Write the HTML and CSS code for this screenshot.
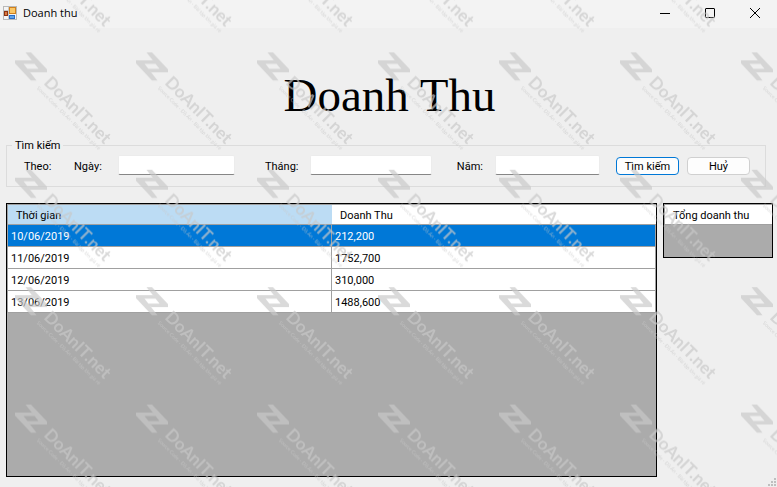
FILE: index.html
```html
<!DOCTYPE html>
<html lang="vi">
<head>
  <meta charset="UTF-8" />
  <meta name="viewport" content="width=device-width, initial-scale=1.0"/>
  <title>Doanh thu</title>
  <link rel="stylesheet" href="styles.css">
</head>
<body>

  <header class="title-bar">
    <svg class="app-icon" width="14" height="14" viewBox="0 0 14 14" aria-hidden="true">
      <rect x="0.5" y="0.5" width="13" height="13" fill="#f4f4f4" stroke="#b9b9b9"/>
      <path d="M1 4.5h5M5.5 1v12" stroke="#c8c8c8"/>
      <rect x="6.5" y="1.5" width="6" height="6" fill="#fbc765" stroke="#d0801c"/>
      <rect x="1.5" y="5.5" width="3" height="4" fill="#d9773f" stroke="#8c3210"/>
      <rect x="6.5" y="9.5" width="5" height="3" fill="#5fa4ea" stroke="#2b6cc4"/>
    </svg>
    <span class="title-text">Doanh thu</span>
    <div class="window-buttons">
      <button type="button" aria-label="Minimize">
        <svg width="12" height="12" viewBox="0 0 12 12"><path d="M1 6.5h10"/></svg>
      </button>
      <button type="button" aria-label="Maximize">
        <svg width="12" height="12" viewBox="0 0 12 12"><rect x="1.5" y="1.5" width="9" height="9" rx="0.5"/></svg>
      </button>
      <button type="button" aria-label="Close">
        <svg width="12" height="12" viewBox="0 0 12 12"><path d="M1 1l10 10M11 1L1 11"/></svg>
      </button>
    </div>
  </header>

  <main class="window-body">
    <h1>Doanh Thu</h1>

    <form>
      <fieldset class="search-box">
        <legend>Tìm kiếm</legend>
        <span class="search-by">Theo:</span>
        <label class="day-label" for="day">Ngày:</label>
        <input class="day" type="text" id="day" />
        <label class="month-label" for="month">Tháng:</label>
        <input class="month" type="text" id="month" />
        <label class="year-label" for="year">Năm:</label>
        <input class="year" type="text" id="year" />
        <div class="buttons">
          <button type="button" class="default">Tìm kiếm</button>
          <button type="button">Huỷ</button>
        </div>
      </fieldset>
    </form>

    <div class="grids">
      <div class="grid revenue">
        <table>
          <thead>
            <tr>
              <th class="current">Thời gian</th>
              <th>Doanh Thu</th>
            </tr>
          </thead>
          <tbody>
            <tr class="selected"><td>10/06/2019</td><td>212,200</td></tr>
            <tr><td>11/06/2019</td><td>1752,700</td></tr>
            <tr><td>12/06/2019</td><td>310,000</td></tr>
            <tr><td>13/06/2019</td><td>1488,600</td></tr>
          </tbody>
        </table>
      </div>
      <div class="grid total">
        <table>
          <thead>
            <tr><th>Tổng doanh thu</th></tr>
          </thead>
        </table>
      </div>
    </div>
  </main>

  <svg class="size-grip" width="9" height="9" viewBox="0 0 9 9" aria-hidden="true">
    <path d="M6 0h2v2h-2zM3 3h2v2h-2zM6 3h2v2h-2zM0 6h2v2h-2zM3 6h2v2h-2zM6 6h2v2h-2z"/>
  </svg>

  <svg class="watermark" aria-hidden="true">
    <defs>
      <pattern id="mark" x="14" y="-65" width="121" height="117.4" patternUnits="userSpaceOnUse">
        <path d="M1 8h16.500l3.500 3.500h-11.500l13 16.500h-5.500l-16-17zM33 20h-16.500l-3.500-3.500h11.500l-13-16.500h5.500l16 17z"/>
        <g transform="translate(31 29) rotate(45)">
          <text class="mark-name" x="0" y="3">DoAnIT.net</text>
          <text class="mark-note" x="-1" y="11">Source Code - Đồ Án - Bài tập lớn giá rẻ</text>
        </g>
      </pattern>
    </defs>
    <rect width="100%" height="100%" fill="url(#mark)"/>
  </svg>

</body>
</html>
```
FILE: styles.css
```css
* {
  box-sizing: border-box;
}

body {
  margin: 0;
  min-height: 100vh;
  display: flex;
  flex-direction: column;
  position: relative;
  background: #efefef;
  color: #000;
  font-family: Roboto, "Liberation Sans", sans-serif;
  font-size: 11px;
  line-height: 16px;
}

button,
input {
  font: inherit;
  color: inherit;
}

.title-bar {
  display: flex;
  align-items: center;
  height: 28px;
  padding-left: 3px;
  padding-bottom: 3px;
  background: #f3f3f3;
}

.title-text {
  flex: 1;
  margin-left: 6px;
  font-family: "Open Sans", sans-serif;
}

.window-buttons {
  display: flex;
}

.window-buttons button {
  display: flex;
  align-items: center;
  justify-content: center;
  width: 45px;
  height: 25px;
  padding: 0;
  border: none;
  background: none;
}

.window-buttons svg {
  fill: none;
  stroke: #000;
}

.window-body {
  flex: 1;
  display: flex;
  flex-direction: column;
  padding: 39px 4px 10px 6px;
}

h1 {
  margin: 0 0 14px;
  font-family: "Liberation Serif", serif;
  font-size: 47px;
  font-weight: normal;
  line-height: 56px;
  text-align: center;
}

.search-box {
  display: flex;
  align-items: center;
  margin: 0 7px 16px 0;
  padding: 1px 15px 11px 17px;
  border: 1px solid #dcdcdc;
}

.search-box legend {
  margin-left: -12px;
  padding: 1px 3px 0;
}

.search-box span,
.search-box label {
  padding-top: 3px;
}

.search-by {
  width: 50px;
}

.day-label {
  width: 44px;
}

.month-label {
  width: 45px;
  margin-left: 30px;
}

.year-label {
  width: 38px;
  margin-left: 25px;
}

.search-box input {
  width: 0;
  height: 20px;
  padding: 0;
  border: 1px solid #ececec;
  border-bottom-color: #868686;
  border-radius: 2px;
  background: #fff;
}

.search-box .day {
  flex: 117;
}

.search-box .month {
  flex: 122;
}

.search-box .year {
  flex: 105;
}

.buttons {
  display: flex;
  gap: 8px;
  margin-top: 2px;
  margin-left: 16px;
}

.buttons button {
  width: 63px;
  height: 18px;
  padding: 2px 0 0;
  border: 1px solid #d0d0d0;
  border-radius: 4px;
  background: #fdfdfd;
  line-height: 14px;
}

.buttons .default {
  border-color: #0078d7;
}

.grids {
  flex: 1;
  display: flex;
  align-items: flex-start;
  gap: 6px;
}

.grid {
  border: 1px solid #000;
  background: #ababab;
}

.revenue {
  flex: 1;
  align-self: stretch;
}

.total {
  width: 110px;
  height: 55px;
}

.grid table {
  width: 100%;
  table-layout: fixed;
  border-collapse: separate;
  border-spacing: 0;
  border-left: 1px solid #a0a0a0;
}

.grid th {
  height: 21px;
  padding: 2px 8px 0;
  border-top: 1px solid #a0a0a0;
  border-bottom: 1px solid #a0a0a0;
  background: #fff;
  font-weight: normal;
  text-align: left;
}

.grid th.current {
  background: #bcdcf4;
}

.grid td {
  height: 22px;
  padding: 2px 3px 0;
  border-right: 1px solid #a0a0a0;
  border-bottom: 1px solid #a0a0a0;
  background: #fff;
}

.grid .selected td {
  background: #0078d7;
  color: #fff;
}

.size-grip {
  position: absolute;
  right: 0;
  bottom: 0;
  fill: #bfbfbf;
}

.watermark {
  position: absolute;
  top: 0;
  left: 0;
  width: 100%;
  height: 100%;
  opacity: 0.68;
  fill: #c9c9c9;
  pointer-events: none;
}

.mark-name {
  font-family: Lato, sans-serif;
  font-size: 17px;
  font-weight: bold;
}

.mark-note {
  font-family: Lato, sans-serif;
  font-size: 5px;
}
```
